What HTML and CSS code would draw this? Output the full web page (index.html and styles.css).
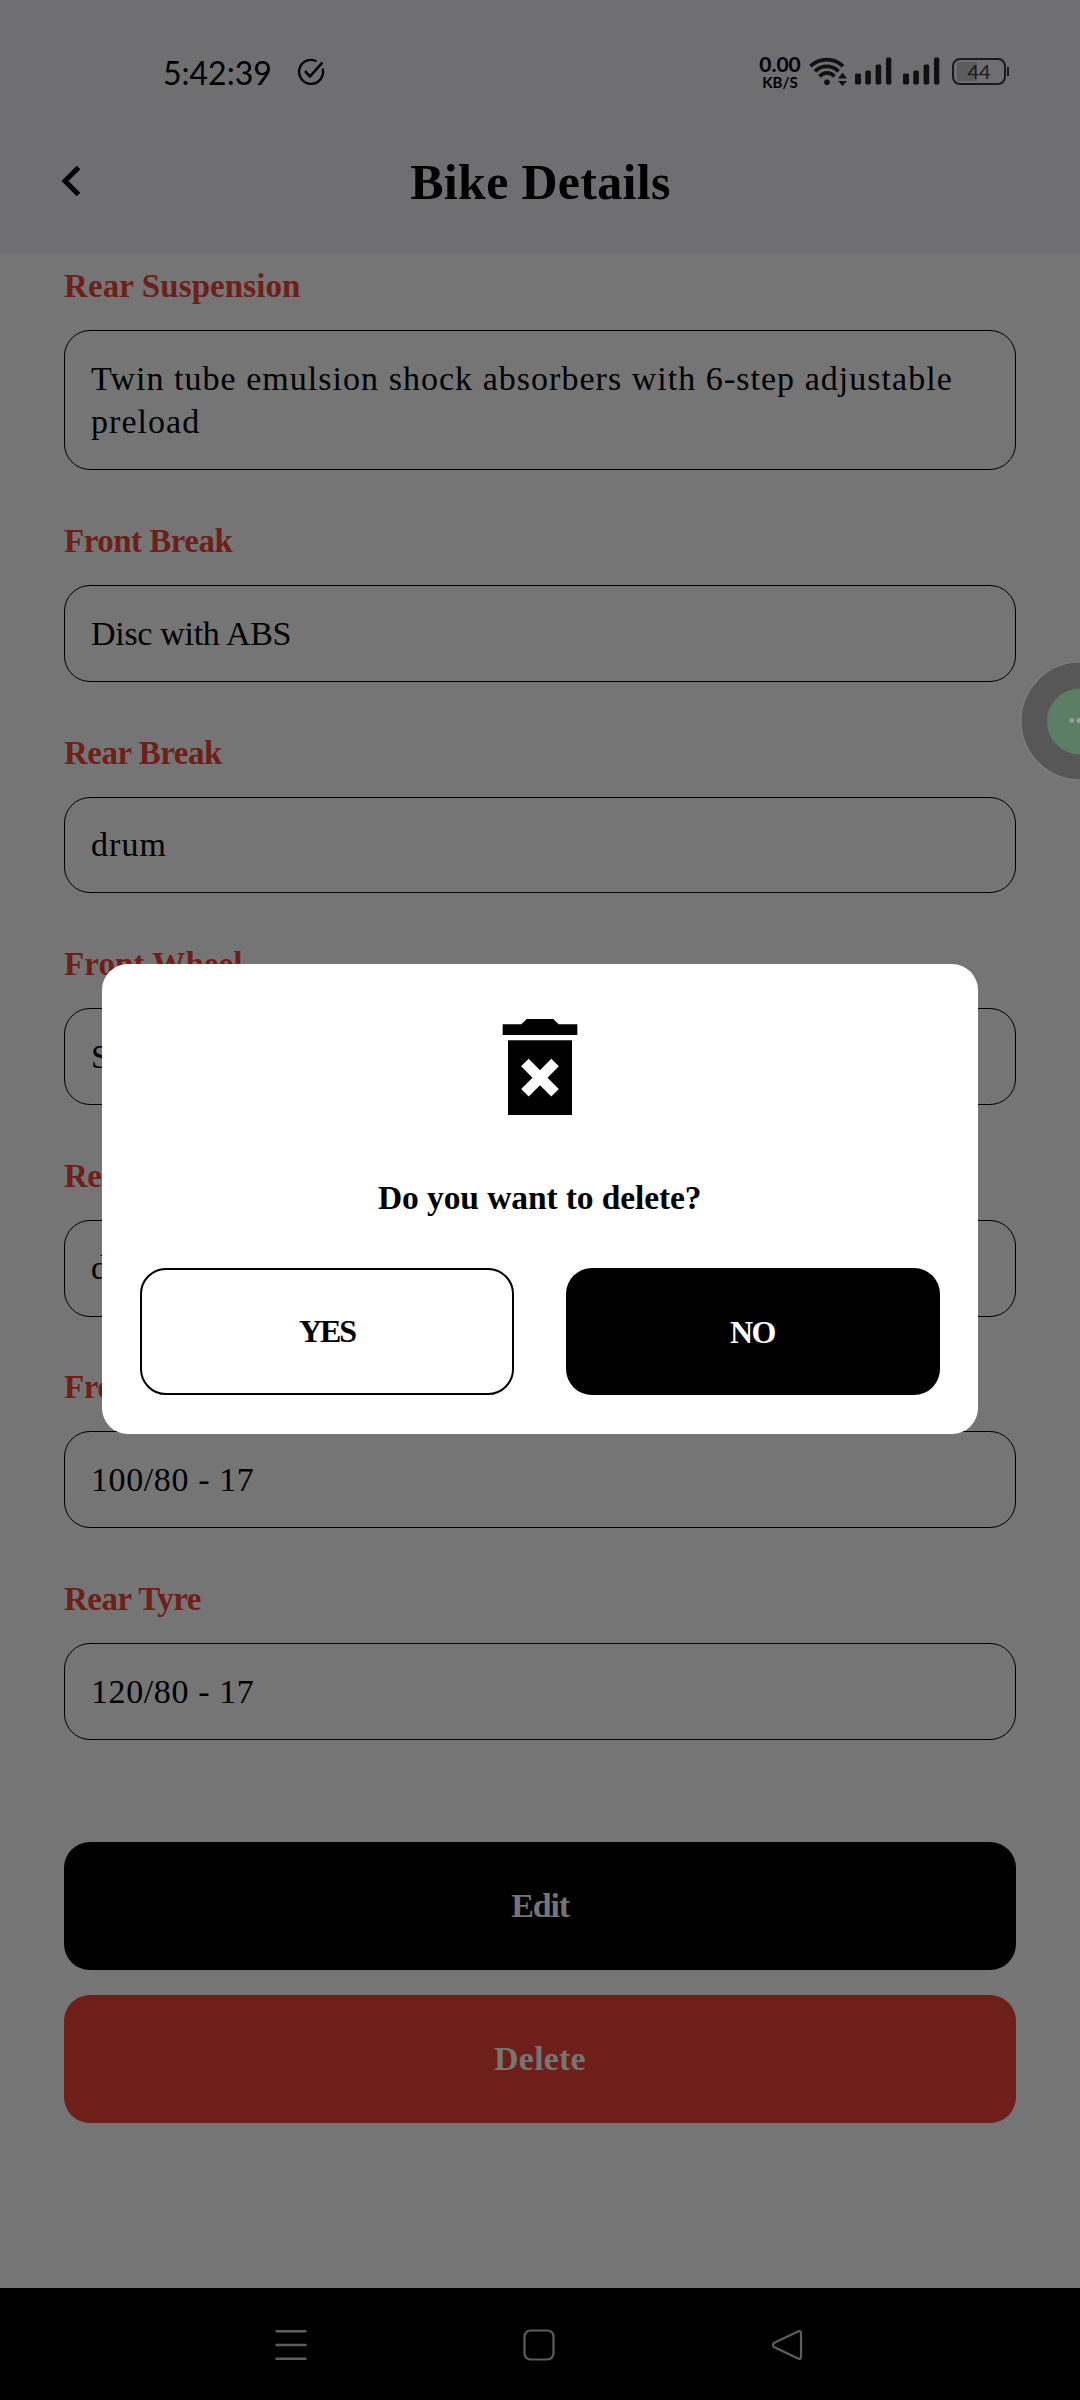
FILE: index.html
```html
<!DOCTYPE html>
<html lang="en">
<head>
<meta charset="utf-8">
<title>Bike Details</title>
<link rel="stylesheet" href="styles.css">
</head>
<body>
<div class="screen">
  <header class="header">
    <div class="status">
      <span class="clock">5:42:39</span>
      <svg class="check" width="28" height="28" viewBox="0 0 28 28" fill="none" stroke="#000" stroke-width="2.3"><path d="M19.5 3.2A12 12 0 1 0 25.6 10.6"/><path d="M8 13.2l5 5.2L25.5 4.5" stroke-width="2.6"/></svg>
      <div class="indicators">
        <div class="speed"><span class="speed-value">0.00</span><span class="speed-unit">KB/S</span></div>
        <svg width="40" height="32" viewBox="0 0 40 32" fill="none" stroke="#111" stroke-width="3.8"><path d="M1.500 10.200C10.500 1.300 25 1.300 34 10.200M6 15.300C12.500 8.700 23 8.700 29.500 15.300M10.500 20.300C15 15.800 21 15.800 25.500 20.300"/><circle cx="18" cy="26.300" r="2.800" fill="#111" stroke="none"/><path d="M29 22.500l4.500-6 4.500 6zM29 25h9l-4.500 5z" fill="#111" stroke="none"/></svg>
        <svg class="signal" width="37" height="28" viewBox="0 0 37 28" fill="#111"><rect x="0" y="16.500" width="6" height="11" rx="1.500"/><rect x="10.300" y="13.500" width="5.600" height="14" rx="1.500"/><rect x="20.600" y="7.500" width="5.600" height="20" rx="1.500"/><rect x="31" y="0.500" width="5.300" height="27" rx="1.500"/></svg>
        <svg class="signal second" width="37" height="28" viewBox="0 0 37 28" fill="#111"><rect x="0" y="16.500" width="6" height="11" rx="1.500"/><rect x="10.300" y="13.500" width="5.600" height="14" rx="1.500"/><rect x="20.600" y="7.500" width="5.600" height="20" rx="1.500"/><rect x="31" y="0.500" width="5.300" height="27" rx="1.500"/></svg>
        <div class="battery"><span>44</span></div>
        <i class="battery-tip"></i>
      </div>
    </div>
    <div class="titlebar">
      <svg class="back" width="20" height="32" viewBox="0 0 20 32" fill="none" stroke="#000" stroke-width="5"><path d="M17.500 2.500L4 16l13.500 13.500"/></svg>
      <h1>Bike Details</h1>
    </div>
  </header>

  <main class="form">
    <section class="field"><h2 class="wide">Rear Suspension</h2><p>Twin tube emulsion shock absorbers with 6-step adjustable preload</p></section>
    <section class="field"><h2>Front Break</h2><p class="tight">Disc with ABS</p></section>
    <section class="field"><h2>Rear Break</h2><p>drum</p></section>
    <section class="field"><h2 class="wide">Front Wheel</h2><p>S</p></section>
    <section class="field"><h2>Rear</h2><p>d</p></section>
    <section class="field"><h2>Front</h2><p class="size">100/80 - 17</p></section>
    <section class="field"><h2>Rear Tyre</h2><p class="size">120/80 - 17</p></section>
    <div class="actions">
      <button class="edit">Edit</button>
      <button class="delete">Delete</button>
    </div>
  </main>

  <nav class="navbar">
    <svg width="32" height="32" viewBox="0 0 32 32" fill="none" stroke="#5e5e5e" stroke-width="2.600"><path d="M0.500 2.300h31M0.500 16h31M0.500 29.700h31"/></svg>
    <svg width="32" height="32" viewBox="0 0 32 32" fill="none" stroke="#5e5e5e" stroke-width="2.200"><rect x="1.500" y="1.500" width="29" height="29" rx="6"/></svg>
    <svg width="32" height="32" viewBox="0 0 32 32" fill="none" stroke="#5e5e5e" stroke-width="2.200"><path d="M27.500 2.300L3 14Q0.800 16 3 18L27.500 29.700Q30 30.500 30 27.500V4.500Q30 1.500 27.500 2.300z"/></svg>
  </nav>

  <div class="bubble"><svg width="60" height="120" viewBox="0 0 60 120"><circle cx="60" cy="60" r="59" fill="#575757" stroke="#808080" stroke-width="1.200"/><circle cx="60" cy="60.500" r="33" fill="#5b7e65"/><circle cx="51.800" cy="59.500" r="2.400" fill="#999f9a"/><circle cx="58.800" cy="59.500" r="2.400" fill="#999f9a"/></svg></div>

  <div class="dialog" role="dialog">
    <svg class="trash" width="128" height="128" viewBox="0 0 24 24"><path fill-rule="evenodd" d="M6 21h12V7H6v14zm2.460-9.120l1.410-1.410L12 12.590l2.120-2.120 1.410 1.410L13.410 14l2.120 2.120-1.410 1.410L12 15.410l-2.120 2.120-1.410-1.410L10.590 14l-2.130-2.120zM15.500 4l-1-1h-5l-1 1H5v2h14V4z"/></svg>
    <p class="question">Do you want to delete?</p>
    <div class="choices">
      <button class="yes">YES</button>
      <button class="no">NO</button>
    </div>
  </div>
</div>
</body>
</html>
```
FILE: styles.css
```css
* { box-sizing: border-box; margin: 0; padding: 0; }
body { background: #757575; font-family: "Liberation Serif", serif; color: #000; }
svg { display: block; flex: none; }
button { font: inherit; border: 0; font-weight: 700; border-radius: 26px; }

.screen { position: relative; width: 1080px; height: 2400px; overflow: hidden; display: flex; flex-direction: column; }

.header { height: 253px; background: #6f6f71; flex: none; display: flex; flex-direction: column; }
.status { height: 108px; padding: 56px 71px 0 163px; display: flex; align-items: flex-start; font-family: Lato, sans-serif; }
.clock { font-size: 32px; line-height: 33px; width: 134px; }
.check { margin-top: 2px; }
.indicators { margin-left: auto; display: flex; align-items: flex-start; }
.speed { width: 44px; margin: -1px 7px 0 0; display: flex; flex-direction: column; align-items: center; font-weight: 700; }
.speed-value { font-size: 21px; line-height: 18px; }
.speed-unit { font-size: 15px; line-height: 14px; margin-top: 2px; }
.signal { margin: 1px 0 0 6px; }
.signal.second { margin-left: 11px; }
.battery { width: 54px; height: 27px; margin: 2px 1px 0 12px; border: 2px solid #1b1b1b; border-radius: 8px; background: linear-gradient(90deg, #5c5c5d 20px, transparent 20px) 3px 2px / 42px 19px no-repeat; color: #1b1b1b; font-size: 20px; line-height: 22px; text-align: center; }
.battery-tip { width: 2px; height: 9px; margin-top: 11px; background: #1b1b1b; }

.titlebar { flex: 1; display: flex; align-items: flex-start; padding: 46px 0 0 61px; }
.back { margin-top: 11px; }
h1 { flex: 1; text-align: center; font-size: 50px; line-height: 56px; letter-spacing: .3px; padding-right: 80px; }

.form { flex: 1; padding: 13px 64px 0; display: flex; flex-direction: column; gap: 50.900px; }
.field { display: flex; flex-direction: column; gap: 24px; }
.field h2 { font-size: 33px; line-height: 40px; letter-spacing: -.500px; color: #6e1f19; }
.field h2.wide { letter-spacing: .100px; }
.field p { border: 1px solid #000; border-radius: 26px; padding: 25.600px 25px 25.600px 26px; font-size: 34px; line-height: 43.500px; letter-spacing: 1.030px; }
.field p.tight { letter-spacing: -.3px; }
.field p.size { letter-spacing: .600px; }

.actions { margin-top: 51.500px; display: flex; flex-direction: column; gap: 25.500px; }
.actions button { height: 127.500px; font-size: 34px; color: #757575; padding-top: 1px; }
.edit { background: #000; letter-spacing: -1.200px; }
.delete { background: #6e1f19; letter-spacing: .200px; }

.navbar { height: 112px; flex: none; background: #000; display: flex; justify-content: center; gap: 216px; padding: 41px 2px 0 0; }

.bubble { position: absolute; right: 0; top: 660.500px; }

.dialog { position: absolute; left: 102px; top: 964px; width: 876px; height: 469.500px; background: #fff; border-radius: 26px; padding: 39px 38.500px 38.500px 38px; display: flex; flex-direction: column; align-items: center; }
.question { font-size: 33.500px; line-height: 40px; font-weight: 700; letter-spacing: -.100px; margin-top: 47px; }
.choices { align-self: stretch; margin-top: auto; display: flex; justify-content: space-between; }
.choices button { width: 374px; height: 127.500px; font-size: 32px; letter-spacing: -2px; }
.yes { background: #fff; border: 2.600px solid #000; color: #000; }
.choices .no { background: #000; color: #fff; padding-top: 2px; letter-spacing: -1.500px; }
```
